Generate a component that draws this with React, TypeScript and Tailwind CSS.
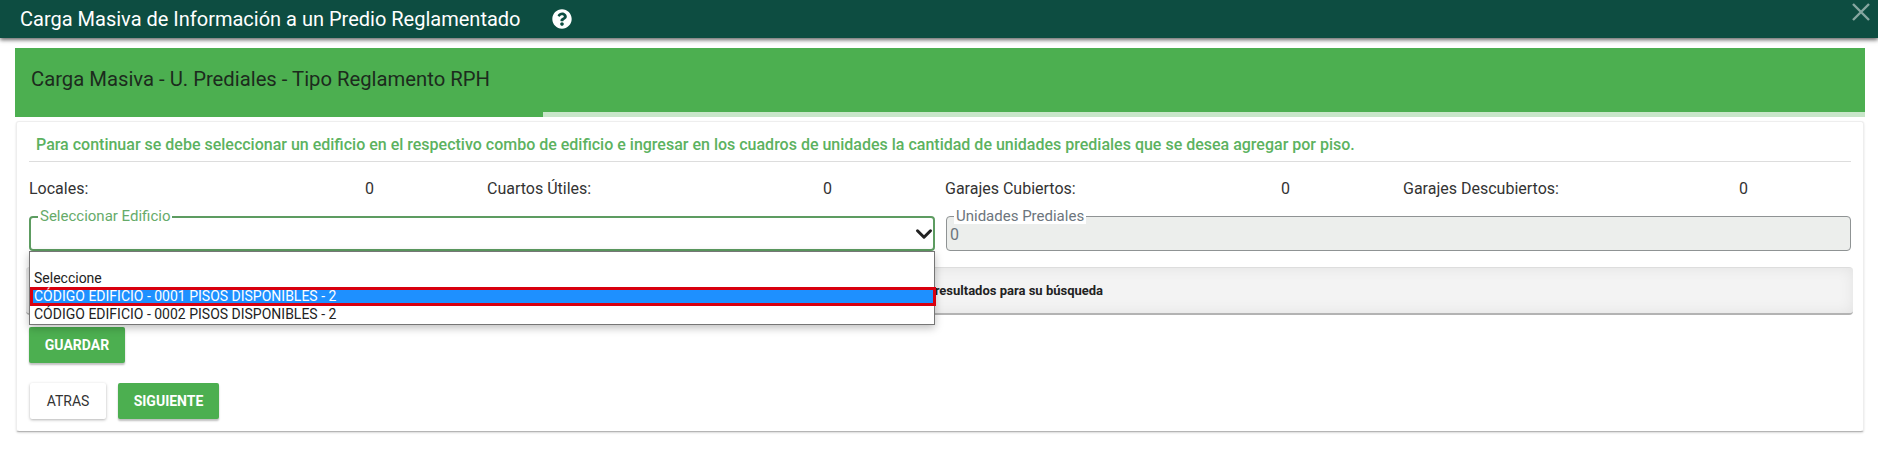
import { ChevronDown } from 'lucide-react'
import { FaQuestionCircle } from 'react-icons/fa'

const stats = [
  { label: 'Locales:', value: 0 },
  { label: 'Cuartos Útiles:', value: 0 },
  { label: 'Garajes Cubiertos:', value: 0 },
  { label: 'Garajes Descubiertos:', value: 0 },
]

const options = [
  { label: 'Seleccione', active: false },
  { label: 'CÓDIGO EDIFICIO - 0001 PISOS DISPONIBLES - 2', active: true },
  { label: 'CÓDIGO EDIFICIO - 0002 PISOS DISPONIBLES - 2', active: false },
]

export default function App() {
  return (
    <div className="w-[1878px] h-[450px] overflow-hidden bg-white text-[#212529] font-['Roboto',sans-serif]">
      <header className="relative z-10 h-[38px] bg-[#0d4d41] shadow-[0_2px_4px_rgba(0,0,0,0.6)] flex items-center pl-[20px] pr-[8px]">
        <h1 className="text-[20px] text-white font-normal">Carga Masiva de Información a un Predio Reglamentado</h1>
        <FaQuestionCircle size={20} className="text-white ml-[31px]" />
        <svg width="18" height="18" viewBox="0 0 18 18" className="ml-auto -mt-[14px] text-white/50" fill="none" stroke="currentColor" strokeWidth="2.4">
          <path d="M1 1 L17 17 M17 1 L1 17" />
        </svg>
      </header>

      <section className="mt-[10px] mx-[15px] w-[1850px] h-[69px] bg-[#4caf50] flex flex-col">
        <div className="flex-1 pl-[16px] flex items-center">
          <h2 className="text-[20.25px] font-normal text-[#1c2b1d] -mt-[1px]">Carga Masiva - U. Prediales - Tipo Reglamento RPH</h2>
        </div>
        <div className="h-[5px] ml-[528px] bg-[#c8e6c9]"></div>
      </section>

      <main className="mt-[4px] ml-[16px] w-[1848px] h-[311px] bg-white rounded-[3px] border border-[#eeeeee] border-b-[#b5b5b5] shadow-[0_1px_2px_rgba(0,0,0,0.15)] px-[12px] flex flex-col">
        <p className="ml-[7px] h-[39px] pt-[13px] text-[16px] leading-[20px] font-medium text-[#5cb25f]">
          Para continuar se debe seleccionar un edificio en el respectivo combo de edificio e ingresar en los cuadros de unidades la cantidad de unidades prediales que se desea agregar por piso.
        </p>
        <div className="h-px w-[1822px] bg-[#dddddd]"></div>

        <div className="grid grid-cols-4 w-[1832px] mt-[17px] h-[20px] text-[16px] leading-[20px] text-[#333333]">
          {stats.map((s) => (
            <div key={s.label} className="flex w-[458px]">
              <span className="w-[336px]">{s.label}</span>
              <span>{s.value}</span>
            </div>
          ))}
        </div>

        <div className="relative mt-[17px] flex gap-[11px] w-[1823px]">
          <div className="relative w-[906px] h-[35px] border-2 border-[#5d9c61] rounded-[4px] bg-white">
            <span className="absolute -top-[10px] left-[7px] px-[2px] bg-white text-[15px] leading-[16px] text-[#66ab6a]">Seleccionar Edificio</span>
            <ChevronDown size={26} strokeWidth={2.8} className="absolute -right-[4px] top-[3px] text-[#222222]" />
          </div>
          <div className="relative w-[905px] h-[35px] border border-[#8f9394] rounded-[4px] bg-[#eceeec]">
            <span className="absolute -top-[9px] left-[7px] px-[2px] bg-white text-[15px] leading-[16px] text-[#6c757d]">Unidades Prediales</span>
            <span className="absolute left-[3px] top-[8px] text-[16px] leading-[20px] text-[#6c757d]">0</span>
          </div>

          <ul className="absolute z-20 left-0 top-[35px] w-[906px] h-[74px] bg-white border border-[#767676] shadow-[0_3px_8px_rgba(0,0,0,0.25)] pt-[17px] text-[14px] leading-[18px] text-[#222222]">
            {options.map((o) => (
              <li
                key={o.label}
                className={o.active ? 'h-[19px] -mb-px -mr-[2px] pl-px leading-[13px] bg-[#1e90ff] text-white border-[3px] border-[#d8000f]' : 'h-[18px] pl-[4px]'}
              >
                {o.label}
              </li>
            ))}
          </ul>
        </div>

        <div className="-ml-[3px] mt-[16px] w-[1827px] h-[48px] rounded-[4px] bg-[#f3f3f3] border-t border-t-[#dddddd] border-b-2 border-b-[#b3b3b3] shadow-[inset_0_0_14px_rgba(0,0,0,0.07)] flex items-center pl-[798px] text-[13px] font-bold text-[#222222]">
          No se encontraron resultados para su búsqueda
        </div>

        <div className="mt-[12px]">
          <button className="h-[36px] w-[96px] rounded-[2px] bg-[#4caf50] text-white text-[14px] font-bold shadow-[0_2px_2px_rgba(0,0,0,0.25)]">GUARDAR</button>
        </div>
        <div className="mt-[20px] ml-[1px] flex gap-[12px]">
          <button className="h-[36px] w-[76px] rounded-[2px] bg-white text-[#333333] text-[14px] font-normal shadow-[0_1px_3px_rgba(0,0,0,0.3)]">ATRAS</button>
          <button className="h-[36px] w-[101px] rounded-[2px] bg-[#4caf50] text-white text-[14px] font-bold shadow-[0_2px_2px_rgba(0,0,0,0.25)]">SIGUIENTE</button>
        </div>
      </main>
    </div>
  )
}
